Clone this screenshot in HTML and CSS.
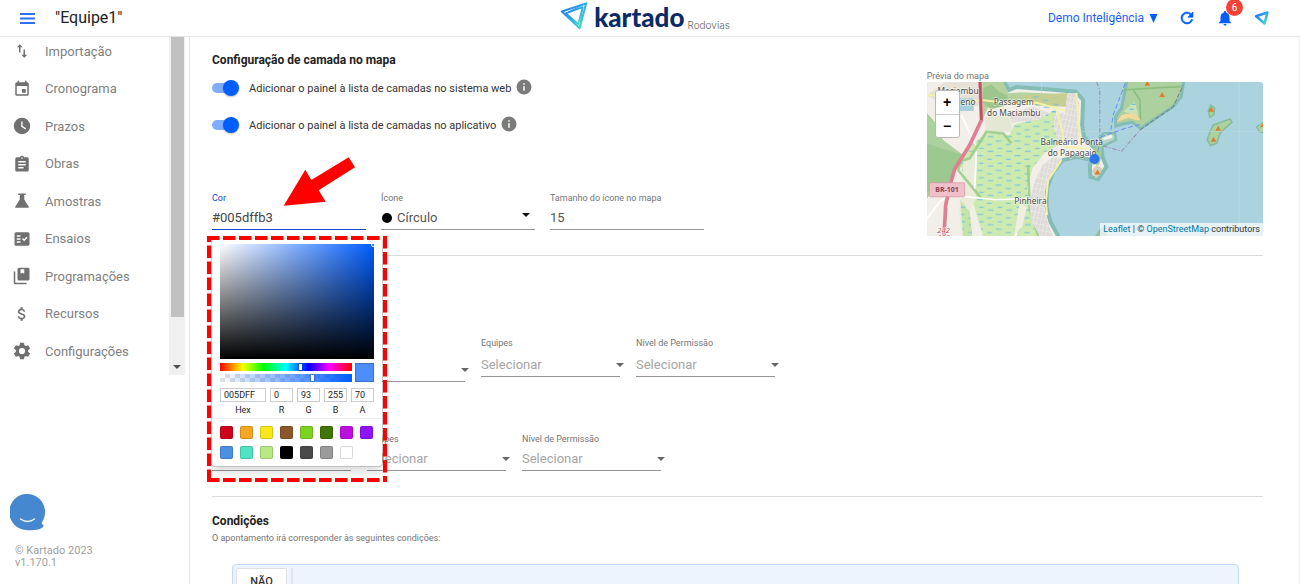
FILE: index.html
```html
<!DOCTYPE html>
<html lang="pt-BR">
<head>
<meta charset="utf-8">
<title>Kartado Rodovias</title>
<link rel="stylesheet" href="styles.css">
</head>
<body>
<svg class="defs" aria-hidden="true">
  <defs>
    <linearGradient id="kite" x1="0" y1="0" x2="1" y2="1"><stop offset="0" stop-color="#1f6bf5"/><stop offset=".45" stop-color="#2aa5e8"/><stop offset="1" stop-color="#4fe3c4"/></linearGradient>
    <symbol id="i-info" viewBox="0 0 24 24"><path d="M12 2a10 10 0 100 20 10 10 0 000-20zm1 15h-2v-6h2v6zm0-8h-2V7h2v2z"/></symbol>
  </defs>
</svg>

<header class="topbar">
  <div class="topbar-left">
    <button class="icon-button" aria-label="Menu"><svg class="menu-icon" viewBox="0 0 15 11"><path d="M0 1h15M0 5.500h15M0 10h15" stroke="#2f70ee" stroke-width="2"/></svg></button>
    <span class="page-title">"Equipe1"</span>
  </div>
  <div class="brand">
    <svg class="brand-mark" viewBox="0 0 84 88"><g fill="none" stroke="url(#kite)" stroke-linejoin="round"><path d="M5 31L76 7 57 80z" stroke-width="6"/><path d="M17 36L66 18 53 68z" stroke-width="5"/><path d="M5 31L53 68M76 7L17 36M57 80L66 18" stroke-width="3"/></g></svg>
    <span class="brand-name">kartado</span><span class="brand-sub">Rodovias</span>
  </div>
  <div class="topbar-right">
    <button class="account">Demo Inteligência <svg class="account-arrow" viewBox="0 0 8 9"><path d="M0 0h8L4 9z" fill="#005dff"/></svg></button>
    <button class="icon-button" aria-label="Atualizar"><svg class="top-icon" viewBox="0 0 24 24"><path fill="#005dff" d="M17.650 6.350A8 8 0 1019.730 14h-2.080A6 6 0 1112 6c1.660 0 3.140.69 4.220 1.780L13 11h7V4z" stroke="#005dff" stroke-width=".8"/></svg></button>
    <button class="icon-button bell" aria-label="Notificações"><svg class="top-icon" viewBox="0 0 24 24"><path fill="#005dff" d="M12 22a2 2 0 002-2h-4a2 2 0 002 2zm6-6v-5c0-3.070-1.640-5.640-4.500-6.320V4a1.500 1.500 0 00-3 0v.68C7.630 5.360 6 7.920 6 11v5l-2 2v1h16v-1z"/></svg><span class="badge">6</span></button>
    <button class="icon-button" aria-label="Kartado"><svg class="kite-small" viewBox="0 0 42 44"><path d="M5 17L36 7 28 37z" fill="none" stroke="url(#kite)" stroke-width="7" stroke-linejoin="round"/></svg></button>
  </div>
</header>

<div class="shell">
  <aside class="sidebar">
    <div class="nav-scroll">
      <nav class="nav">
        <a href="#"><svg viewBox="0 0 24 24"><path d="M9 3L5 7h3v7h2V7h3zM16 17v-7h-2v7h-3l4 4 4-4z"/></svg>Importação</a>
        <a href="#"><svg viewBox="0 0 24 24"><path d="M17 12h-5v5h5zM16 1v2H8V1H6v2H5a2 2 0 00-2 2v14a2 2 0 002 2h14a2 2 0 002-2V5a2 2 0 00-2-2h-1V1zm3 18H5V8h14z"/></svg>Cronograma</a>
        <a href="#"><svg viewBox="0 0 24 24"><path d="M12 1a11 11 0 100 22 11 11 0 000-22zm4.600 15.600L11 13V6h1.800v6.100l4.700 2.900z"/></svg>Prazos</a>
        <a href="#"><svg viewBox="0 0 24 24"><path d="M19 3h-4.180a3 3 0 00-5.640 0H5a2 2 0 00-2 2v15a2 2 0 002 2h14a2 2 0 002-2V5a2 2 0 00-2-2zm-7 0a1 1 0 110 2 1 1 0 010-2zm2 15H7v-2h7zm3-4H7v-2h10zm0-4H7V8h10z"/></svg>Obras</a>
        <a href="#"><svg viewBox="0 0 24 24"><path d="M7 2h10v2h-2v6l6 9.500V21H3v-1.500L9 10V4H7z"/></svg>Amostras</a>
        <a href="#"><svg viewBox="0 0 24 24"><path d="M20 3H4a2 2 0 00-2 2v14a2 2 0 002 2h16a2 2 0 002-2V5a2 2 0 00-2-2zM10 17H5v-2h5zm0-4H5v-2h5zm0-4H5V7h5zm4.820 6L12 12.160l1.410-1.410 1.410 1.420L17.990 9l1.420 1.420z"/></svg>Ensaios</a>
        <a href="#"><svg viewBox="0 0 24 24"><path d="M3 6H1v15a2 2 0 002 2h15v-2H3zM20 1H8a2 2 0 00-2 2v13a2 2 0 002 2h12a2 2 0 002-2V3a2 2 0 00-2-2zm-5 8l-2.500-1.500L10 9V3h5z"/></svg>Programações</a>
        <a href="#"><svg viewBox="0 0 24 24"><path d="M11.800 10.900c-2.270-.59-3-1.200-3-2.150 0-1.090 1.010-1.850 2.700-1.850 1.780 0 2.440.85 2.500 2.100h2.210c-.07-1.720-1.120-3.300-3.210-3.810V3h-3v2.160c-1.940.42-3.500 1.680-3.500 3.610 0 2.310 1.910 3.460 4.700 4.130 2.500.6 3 1.480 3 2.410 0 .69-.49 1.790-2.700 1.790-2.060 0-2.870-.92-2.980-2.100h-2.200c.12 2.190 1.760 3.420 3.680 3.830V21h3v-2.150c1.950-.37 3.500-1.500 3.500-3.550 0-2.840-2.430-3.810-4.700-4.400z"/></svg>Recursos</a>
        <a href="#"><svg viewBox="1.500 1.500 21 21"><path d="M19.140 12.940a7 7 0 000-1.880l2.030-1.580a.5.500 0 00.12-.61l-1.920-3.320a.5.500 0 00-.59-.22l-2.390.96a7 7 0 00-1.620-.94l-.36-2.540A.5.500 0 0013.920 2.400h-3.840a.5.500 0 00-.47.41l-.36 2.540a7 7 0 00-1.620.94l-2.390-.96a.5.500 0 00-.59.22L2.740 8.870a.5.500 0 00.12.61l2.030 1.580a7 7 0 000 1.880l-2.030 1.580a.5.500 0 00-.12.61l1.920 3.320c.12.220.370.290.590.220l2.390-.96c.5.380 1.030.7 1.620.94l.36 2.540c.05.240.240.410.480.410h3.840c.240 0 .440-.17.470-.41l.36-2.540a7 7 0 001.620-.94l2.390.96c.220.080.470 0 .590-.22l1.920-3.320a.5.500 0 00-.12-.61zM12 15.600a3.600 3.600 0 110-7.200 3.600 3.600 0 010 7.200z"/></svg>Configurações</a>
      </nav>
      <div class="scrollbar"><span class="thumb"></span><span class="scroll-down"></span></div>
    </div>
    <footer class="side-foot">
      <button class="chat" aria-label="Ajuda"><svg viewBox="0 0 36 37"><path d="M17.500 0a17.500 18 0 0116 25.500c-.6 1.400-2 3-1.800 4 .2.800 2 1.500 1.800 2.500-.1 1.500-3.500 3-5.500 3.500-3 .8-8 1-12 .5A17.500 18 0 0117.500 0z" fill="#4588cf"/><path d="M10.500 25q7 5 14 0" fill="none" stroke="#fff" stroke-width="1.400" stroke-linecap="round"/></svg></button>
      <p>© Kartado 2023<br>v1.170.1</p>
    </footer>
  </aside>

  <main class="content">
    <section class="section layer">
      <div class="layer-form">
        <h2>Configuração de camada no mapa</h2>
        <div class="toggles">
          <div class="toggle-row"><label class="toggle"><input type="checkbox" checked>Adicionar o painel à lista de camadas no sistema web</label><svg class="info"><use href="#i-info"/></svg></div>
          <div class="toggle-row"><label class="toggle"><input type="checkbox" checked>Adicionar o painel à lista de camadas no aplicativo</label><svg class="info"><use href="#i-info"/></svg></div>
        </div>
        <div class="fields">
          <div class="field field-active color-field">
            <label for="cor">Cor</label>
            <input class="control" id="cor" value="#005dffb3">
            <svg class="callout-arrow" viewBox="0 0 73 50"><path d="M.7 48.700L22.300 12.700l6 10.300L65.700.3 72 10.300 35.700 33.300l7 11.400z" fill="#f00"/></svg>
            <div class="picker">
              <div class="picker-main">
                <div class="saturation"><span class="sat-pointer"></span></div>
                <div class="sliders">
                  <div class="bars">
                    <div class="hue"><span class="knob hue-knob"></span></div>
                    <div class="alpha"><span class="knob alpha-knob"></span></div>
                  </div>
                  <div class="current"></div>
                </div>
                <div class="values">
                  <div><input id="hex" value="005DFF"><label for="hex">Hex</label></div>
                  <div><input id="r" value="0"><label for="r">R</label></div>
                  <div><input id="g" value="93"><label for="g">G</label></div>
                  <div><input id="b" value="255"><label for="b">B</label></div>
                  <div><input id="a" value="70"><label for="a">A</label></div>
                </div>
              </div>
              <div class="presets">
                <button class="c1" aria-label="#D0021B"></button><button class="c2" aria-label="#F5A623"></button><button class="c3" aria-label="#F8E71C"></button><button class="c4" aria-label="#8B572A"></button><button class="c5" aria-label="#7ED321"></button><button class="c6" aria-label="#417505"></button><button class="c7" aria-label="#BD10E0"></button><button class="c8" aria-label="#9013FE"></button>
                <button class="c9" aria-label="#4A90E2"></button><button class="c10" aria-label="#50E3C2"></button><button class="c11" aria-label="#B8E986"></button><button class="c12" aria-label="#000000"></button><button class="c13" aria-label="#4A4A4A"></button><button class="c14" aria-label="#9B9B9B"></button><button class="c15" aria-label="#FFFFFF"></button>
              </div>
            </div>
            <svg class="callout-frame" viewBox="0 0 180 246"><path d="M0 2H180M2 246V0M178 0V246M0 244H180" fill="none" stroke="#f00" stroke-width="4" stroke-dasharray="12.500 3.500"/></svg>
          </div>
          <div class="field">
            <label for="icone">Ícone</label>
            <div class="select select-inset"><span class="dot"></span><select class="control" id="icone"><option>Círculo</option></select></div>
          </div>
          <div class="field">
            <label for="tamanho">Tamanho do ícone no mapa</label>
            <input class="control" id="tamanho" value="15">
          </div>
        </div>
      </div>
      <div class="preview">
        <span class="preview-label">Prévia do mapa</span>
        <div class="map">
          <svg class="map-art" viewBox="22 51 1008 462">
            <defs>
              <pattern id="marsh" width="56" height="44" patternUnits="userSpaceOnUse"><path d="M4 8h18M34 18h15M10 30h14M36 39h17" stroke="#6dbbe6" stroke-width="3"/></pattern>
              <pattern id="streets" width="11" height="17" patternUnits="userSpaceOnUse" patternTransform="rotate(12)"><rect width="11" height="17" fill="#dedad7"/><path d="M0 0h11M0 0v17" stroke="#f4f2f0" stroke-width="2.500"/></pattern>
            </defs>
            <rect x="22" y="51" width="1008" height="462" fill="#aad3df"/>
            <path d="M0 30H240L268 75 290 66 400 74 468 80 490 105 487 180 492 215 520 245 545 245 548 275 560 305 535 342 512 335 510 305 515 285 470 275 430 285 400 320 382 370 380 425 392 470 430 540H0z" fill="#f2efe9" stroke="#83bdb6" stroke-width="12"/>
            <path d="M22 145L45 170 70 225 130 270 105 310 80 352 50 365 22 400z" fill="#add19e"/>
            <path d="M22 236L130 270 108 308 90 350 22 380z" fill="#9cc98f"/>
            <path d="M187 51H250L266 85 300 82 440 88 430 110 350 96 325 120 210 116 190 160z" fill="#b5d29e"/>
            <path d="M190 70l25-12 20 20 30 15-12 30-40 10-25-20z" fill="#9cc68c"/>
            <path d="M300 92L445 84 438 125 350 122z" fill="#c6cf91"/>
            <path d="M195 158L265 145 280 200 200 198z" fill="#e3e7d4"/>
            <path d="M285 178L360 160 410 132 403 190 425 235 375 262 338 310 322 370 330 440 350 513H190L165 430 150 380 130 330 122 290 160 235 200 205 270 210z" fill="#cdebb0"/>
            <path d="M285 178L360 160 410 132 403 190 425 235 375 262 338 310 322 370 330 440 350 513H190L165 430 150 380 130 330 122 290 160 235 200 205 270 210z" fill="url(#marsh)"/>
            <path d="M320 88L420 100 415 165 360 150z" fill="url(#marsh)"/>
            <path d="M130 290L172 255 168 400 150 440 155 500 125 510 118 430 130 370z" fill="#e9ecd8"/>
            <path d="M122 405L150 440 158 513H130z" fill="#c4e5aa"/><path d="M122 405L150 440 158 513H130z" fill="url(#marsh)"/>
            <path d="M195 200L250 205 275 235M115 290L150 280 200 200M325 300L330 430 355 513M130 270L115 315 185 400" fill="none" stroke="#95c97f" stroke-width="8" opacity=".8"/>
            <path d="M442 88L468 84 478 115 473 170 476 225 432 235 425 190 438 130z" fill="url(#streets)"/>
            <path d="M402 155l30-15-4 90-18-10z" fill="url(#streets)"/>
            <path d="M400 275L428 280 395 325 375 380 374 435 390 490 400 513H362L335 470 328 410 345 350 368 300z" fill="url(#streets)"/>
            <path d="M262 145l80-20 45 20-30 20-80 8z" fill="url(#streets)"/>
            <path d="M75 51l110 0 2 70-90 15-75-45z" fill="#e6e2d8"/><path d="M120 100h42v38h-42z" fill="#a8cfdc"/>
            <path d="M22 91L75 91M120 115L187 105 275 116 350 113 437 137M410 135L427 195 433 245 500 250M470 84L480 225M425 285L385 345 378 410 382 450" fill="none" stroke="#f5f1a8" stroke-width="6"/>
            <path d="M125 150L168 240M60 410L90 390 230 404 330 400M22 460L65 405M300 430L288 513M170 260L165 370" fill="none" stroke="#fff" stroke-width="5"/>
            <path d="M300 415l22 10-15 60-25 28z" fill="#efeee0"/>
            <path d="M181 51L185 165 150 240 105 312 90 365 78 420 73 513" fill="none" stroke="#e07f94" stroke-width="11"/>
            <path d="M181 51L185 165" stroke="#b5555b" stroke-width="7"/>
            <path d="M540 218L550 205 585 203 588 225 550 243z" fill="#b4d5c6" stroke="#83bdb6" stroke-width="7"/>
            <path d="M545 220l30-12 4 10-25 7z" fill="#f6f4ee"/>
            <path d="M520 248L545 240 545 272 538 300 520 298z" fill="#9fcd94"/>
            <path d="M516 318L530 300 547 310 540 330 528 340z" fill="#d6cfb4"/>
            <path d="M625 30H795L784 95 760 125 725 148 662 190 638 172 612 176 588 183 587 155 605 130 615 80z" fill="#add19e" stroke="#83bdb6" stroke-width="9"/>
            <path d="M608 75L720 68 785 65M640 74L660 105 662 165" fill="none" stroke="#8cbe7e" stroke-width="5"/>
            <path d="M590 172L605 150 645 142 663 166 650 166 625 158z" fill="#f3d99a"/><path d="M610 140l34-30 12 40z" fill="#c7e3ba"/>
            <path d="M636 118h10M630 133h12" stroke="#62b4e6" stroke-width="3"/>
            <path d="M865 138l8-18 11 10-2 18-12 9z" fill="#add19e" stroke="#86bd9c" stroke-width="5"/>
            <path d="M862 225L870 200 880 180 930 162 936 172 915 190 900 205 890 235 872 241z" fill="#add19e" stroke="#86bd9c" stroke-width="5"/>
            <path d="M1040 166L1010 185 1018 200 1040 206z" fill="#add19e" stroke="#86bd9c" stroke-width="4"/>
            <path d="M525 513L540 490 560 487 560 513z" fill="#8fbfa0"/>
            <path d="M365 51V85M958 51V475M480 199H1030" stroke="#bdd8e0" stroke-width="2" fill="none"/>
            <path d="M530 51L540 75V245M550 243L606 258 660 195" fill="none" stroke="#9c8bb0" stroke-width="3" stroke-dasharray="14 5 4 5"/>
            <path d="M660 195L760 125 790 60" fill="none" stroke="#777f85" stroke-width="3" stroke-dasharray="14 5"/>
            <path d="M616 55L580 150 573 195M660 178L610 192 545 215 530 275" fill="none" stroke="#6b8cf0" stroke-width="3" stroke-dasharray="14 8"/>
            <path d="M674 62l8-14 9 14zM718 96l9-15 8 15zM865 140l9-15 8 15zM886 197l9-15 8 15zM872 230l9-15 8 15zM1021 187l9-15v15zM524 328l9-15 9 15z" fill="#db7c30"/>
            <g class="map-names"><text x="115" y="86">Maciambu</text><text x="115" y="119">Pequeno</text><text x="282" y="119">Passagem</text><text x="282" y="153">do Maciambu</text><text x="456" y="241">Balneário Ponta</text><text x="457" y="274">do Papagaio</text><text x="332" y="417">Pinheira</text></g>
            <rect x="29" y="353" width="106" height="42" rx="4" fill="#edc0ca" stroke="#d88a9b" stroke-width="2"/><text class="road" x="82" y="382">BR-101</text>
            <g class="peaks"><text x="72" y="503">242</text><text x="72" y="524">232</text></g>
            <circle cx="524" cy="282" r="15" fill="#1f6df2" opacity=".9"/>
          </svg>
          <div class="zoom"><button aria-label="Aproximar">+</button><button aria-label="Afastar">−</button></div>
          <div class="attribution"><a href="#">Leaflet</a> | © <a href="#">OpenStreetMap</a> contributors</div>
        </div>
      </div>
    </section>

    <section class="section filters">
      <div class="fields fields-mid">
        <div class="field field-wide"><label for="f1">Usuários</label><div class="select"><select class="control" id="f1"><option></option></select></div></div>
        <div class="field field-small"><label for="f2">Equipes</label><div class="select"><select class="control" id="f2"><option>Selecionar</option></select></div></div>
        <div class="field field-small"><label for="f3">Nível de Permissão</label><div class="select"><select class="control" id="f3"><option>Selecionar</option></select></div></div>
      </div>
      <div class="fields">
        <div class="field field-small"><label for="f4">Usuários</label><div class="select"><select class="control" id="f4"><option>Selecionar</option></select></div></div>
        <div class="field field-small"><label for="f5">Equipes</label><div class="select"><select class="control" id="f5"><option>Selecionar</option></select></div></div>
        <div class="field field-small"><label for="f6">Nível de Permissão</label><div class="select"><select class="control" id="f6"><option>Selecionar</option></select></div></div>
      </div>
    </section>

    <section class="conditions">
      <h2>Condições</h2>
      <p>O apontamento irá corresponder às seguintes condições:</p>
      <div class="builder"><button>NÃO</button><span class="builder-line"></span></div>
    </section>
  </main>
</div>
</body>
</html>
```
FILE: styles.css
```css
* { box-sizing: border-box; }
body { margin: 0; height: 100vh; overflow: hidden; display: flex; flex-direction: column; font-family: Roboto, "Liberation Sans", sans-serif; color: #333; background: #fff; }
button { font: inherit; padding: 0; border: 0; background: none; cursor: pointer; }
input, select { font: inherit; color: inherit; }
h2, p { margin: 0; }
svg { display: block; }
.defs { position: absolute; width: 0; height: 0; }

.topbar { flex: none; display: grid; grid-template-columns: 1fr auto 1fr; align-items: center; height: 37px; padding: 0 30px 0 20px; border-bottom: 1px solid #e4e4e4; }
.topbar-left { display: flex; align-items: center; gap: 20px; }
.menu-icon { width: 15px; height: 11px; }
.page-title { font-size: 16px; line-height: 20px; color: #222; }
.brand { display: flex; align-items: flex-end; height: 34px; padding-bottom: 4px; }
.brand-mark { width: 29px; height: 30px; margin-right: 5px; }
.brand-name { font-family: Lato, sans-serif; font-weight: 900; font-size: 26px; line-height: 28px; color: #0b2b66; }
.brand-sub { margin-left: 3px; font-family: Inter, sans-serif; font-weight: 300; font-size: 10px; line-height: 12px; color: #666; }
.topbar-right { display: flex; align-items: center; justify-content: flex-end; gap: 20px; }
.account { display: flex; align-items: center; gap: 5px; font-size: 12px; line-height: 16px; color: #1a5cf0; }
.account-arrow { width: 9px; height: 9px; }
.top-icon { width: 18px; height: 18px; }
.bell { position: relative; }
.badge { position: absolute; left: 10px; top: -10px; width: 17px; height: 17px; border-radius: 50%; background: #f44336; color: #fff; font-size: 10px; line-height: 17px; text-align: center; }
.kite-small { width: 16px; height: 16px; }

.shell { flex: 1; min-height: 0; display: flex; }
.sidebar { flex: none; width: 190px; display: flex; flex-direction: column; justify-content: space-between; border-right: 1px solid #e4e4e4; }
.nav-scroll { display: flex; justify-content: space-between; height: 338px; padding-right: 4px; }
.nav { display: flex; flex-direction: column; justify-content: space-between; padding: 0 0 10px 13px; }
.nav a { display: flex; align-items: center; gap: 14px; height: 28px; font-size: 13px; color: #808080; text-decoration: none; }
.nav svg { width: 18px; height: 18px; fill: #707070; }
.scrollbar { width: 16px; display: flex; flex-direction: column; align-items: center; justify-content: space-between; background: #f0f0f0; }
.thumb { width: 13px; height: 280px; background: #c1c1c1; }
.scroll-down { margin-bottom: 6px; border: 4px solid transparent; border-top-color: #505050; border-bottom: 0; }
.side-foot { padding: 0 0 15px 10px; }
.chat { display: block; }
.chat svg { width: 36px; height: 37px; }
.side-foot p { margin-top: 14px; padding-left: 5px; font-size: 11px; line-height: 12px; color: #a0a0a0; }

.content { flex: 1; min-width: 0; overflow: hidden; padding: 0 36px 0 22px; border-right: 1px solid #eee; }
.section { border-bottom: 1px solid #dcdcdc; padding-bottom: 25px; }
h2 { font-size: 12px; line-height: 16px; font-weight: 700; color: #222; }
.layer { display: flex; justify-content: space-between; padding-bottom: 19px; }
.layer-form { padding-top: 15px; }
.toggles { display: flex; flex-direction: column; gap: 17px; margin: 10px 0 57px; }
.toggle-row { display: flex; align-items: flex-start; gap: 4px; height: 20px; }
.toggle { display: flex; align-items: center; gap: 10px; height: 20px; font-size: 11px; }
.toggle input { appearance: none; position: relative; width: 27px; height: 16px; margin: 0; }
.toggle input::before { content: ""; position: absolute; left: 0; top: 3px; width: 24px; height: 10px; border-radius: 5px; background: #80aeff; }
.toggle input::after { content: ""; position: absolute; right: 0; top: 0; width: 16px; height: 16px; border-radius: 50%; background: #005dff; box-shadow: 0 1px 2px #0004; }
.info { width: 18px; height: 18px; fill: #7b7b7b; }

.fields { display: flex; align-items: flex-start; gap: 15px; }
.field { position: relative; flex: none; width: 154px; display: flex; flex-direction: column; gap: 3px; color: #555; }
.field label { font-size: 9px; line-height: 12px; color: #757575; }
.control { display: block; width: 100%; height: 23px; padding: 0 0 2px; border: 0; border-bottom: 1px solid #949494; border-radius: 0; background: none; font-size: 13px; outline: 0; appearance: none; }
.field-active > label { color: #1a45d0; }
.field-active > .control { border-color: #1a45d0; color: #444; }
.select { position: relative; }
.select::after { content: ""; position: absolute; right: -4px; top: 9px; border: 4px solid transparent; border-top-color: #666; border-bottom: 0; }
.select-inset::after { right: 5px; top: 6px; border-top-color: #111; }
.select-inset .control { padding-left: 16px; }
.dot { position: absolute; left: 1px; top: 6px; width: 10px; height: 10px; border-radius: 50%; background: #000; }

.preview { width: 32%; padding-top: 33px; }
.preview-label { display: block; font-size: 9px; line-height: 12px; color: #757575; }
.map { position: relative; border-radius: 3px; overflow: hidden; }
.map-art { width: 100%; }
.map-art text { font-family: "Noto Sans", sans-serif; text-anchor: middle; }
.map-names { font-size: 25px; fill: #4a4a4a; stroke: #fff; stroke-opacity: .6; stroke-width: 4px; paint-order: stroke; }
.map-art .road { font-size: 21px; font-weight: 700; fill: #8c4056; }
.peaks { font-size: 23px; font-style: italic; fill: #cf4050; stroke: #fff; stroke-width: 3px; paint-order: stroke; }
.zoom { position: absolute; left: 8px; top: 8px; width: 25px; border: 1px solid #b8b8b8; border-radius: 3px; background: #fff; overflow: hidden; }
.zoom button { display: block; width: 100%; height: 23px; font: 700 14px/23px "Liberation Sans", sans-serif; color: #000; }
.zoom button + button { border-top: 1px solid #ccc; }
.attribution { position: absolute; right: 0; bottom: 0; padding: 0 3px; background: #ffffffb3; font-size: 9px; line-height: 13px; color: #333; }
.attribution a { color: #0078a8; text-decoration: none; }

.color-field { z-index: 2; }
.callout-arrow { position: absolute; left: 71px; top: -35px; width: 73px; height: 50px; }
.callout-frame { position: absolute; left: -5px; top: 44px; width: 180px; height: 246px; pointer-events: none; }
.picker { position: absolute; left: 0; top: 47px; width: 170px; border-radius: 3px; background: #fff; box-shadow: 0 0 0 1px #00000026, 0 6px 12px #00000026; }
.picker-main { padding: 5px 8px 2px; border-bottom: 1px solid #eee; }
.saturation { position: relative; height: 115px; overflow: hidden; background: linear-gradient(to top, #000, transparent), linear-gradient(to right, #fff, #005dff); }
.sat-pointer { position: absolute; right: -1px; top: -1px; width: 4px; height: 4px; border: 1px solid #fff; border-radius: 50%; }
.sliders { display: flex; gap: 3px; margin-top: 4px; }
.bars { flex: 1; display: flex; flex-direction: column; gap: 3px; }
.hue, .alpha { position: relative; height: 8px; }
.hue { background: linear-gradient(to right, #f00, #ff0 17%, #0f0 33%, #0ff 50%, #00f 67%, #f0f 83%, #f00); }
.alpha { background: linear-gradient(to right, transparent, #005dff), repeating-conic-gradient(#e2e2e2 0 25%, #fff 0 50%) 0 0 / 10px 8px; }
.knob { position: absolute; top: 1px; width: 3px; height: 6px; background: #fff; box-shadow: 0 0 2px #0009; }
.hue-knob { left: 60%; }
.alpha-knob { left: 69%; }
.current { width: 19px; height: 19px; border: 1px solid #3b70c8; background: #4d8eff; }
.values { display: grid; grid-template-columns: 2fr 1fr 1fr 1fr 1fr; gap: 4px; margin-top: 6px; }
.values div { display: flex; flex-direction: column; align-items: center; gap: 2px; }
.values input { width: 100%; height: 14px; padding: 0 0 0 3px; border: 1px solid #ccc; font-size: 9px; color: #222; outline: 0; }
.values label { font-size: 9px; line-height: 12px; color: #222; }
.presets { display: grid; grid-template-columns: repeat(8, 13px); gap: 7px; padding: 7px 0 7px 8px; }
.presets button { width: 13px; height: 13px; border-radius: 2px; box-shadow: inset 0 0 0 1px #00000026; }
.c1 { background: #d0021b; } .c2 { background: #f5a623; } .c3 { background: #f8e71c; } .c4 { background: #8b572a; }
.c5 { background: #7ed321; } .c6 { background: #417505; } .c7 { background: #bd10e0; } .c8 { background: #9013fe; }
.c9 { background: #4a90e2; } .c10 { background: #50e3c2; } .c11 { background: #b8e986; } .c12 { background: #000; }
.c13 { background: #4a4a4a; } .c14 { background: #9b9b9b; } .c15 { background: #fff; }

.filters { display: flex; flex-direction: column; gap: 51px; padding-top: 81px; }
.filters .fields { gap: 16px; }
.filters .control { color: #a5a5a5; }
.field-small { width: 139px; }
.fields-mid .field { gap: 5px; }
.fields-mid .field-wide { width: 253px; gap: 10px; }

.conditions { padding-top: 16px; }
.conditions p { margin-top: 3px; font-size: 9px; line-height: 12px; color: #757575; }
.builder { display: flex; gap: 4px; height: 80px; margin: 20px 24px 0 20px; padding: 3px; border: 1px solid #c3dcfb; border-radius: 4px; background: #edf4fe; }
.builder button { width: 51px; height: 26px; border: 1px solid #e0e0e0; border-radius: 2px; background: #fff; font-size: 11px; font-weight: 500; color: #333; }
.builder-line { width: 2px; height: 26px; background: #dfe3ea; }
```
